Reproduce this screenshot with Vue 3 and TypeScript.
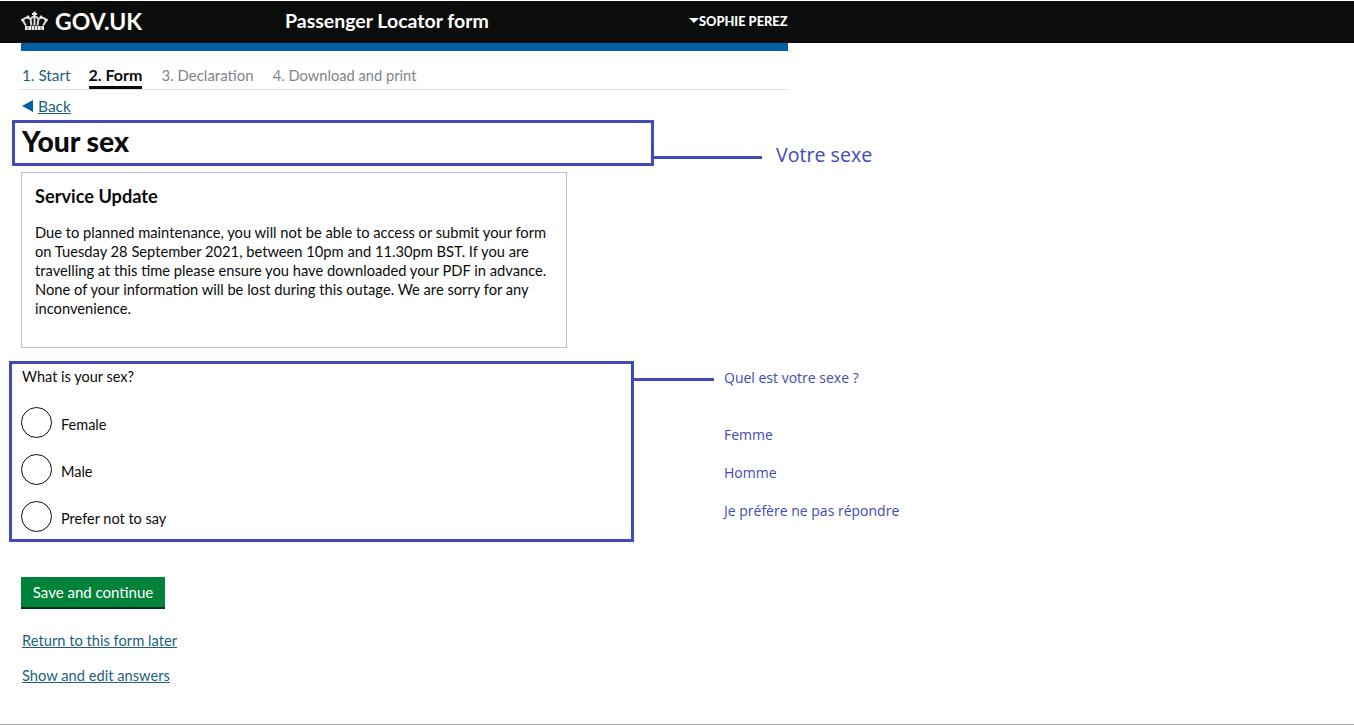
<script setup lang="ts">
const steps = [
  { label: '1. Start', state: 'done' },
  { label: '2. Form', state: 'current' },
  { label: '3. Declaration', state: 'todo' },
  { label: '4. Download and print', state: 'todo' },
]
const options = ['Female', 'Male', 'Prefer not to say']
const translations = [
  { text: 'Femme', cls: 'tr-1' },
  { text: 'Homme', cls: 'tr-2' },
  { text: 'Je préfère ne pas répondre', cls: 'tr-3' },
]
</script>

<template>
  <div class="page">
    <header class="topbar">
      <div class="brand">
        <svg class="crown" viewBox="0 0 27 20" width="27" height="20" aria-hidden="true">
          <g fill="none" stroke="#d8d8d8" stroke-width="2">
            <path d="M5 14.5 C3 12 2 10 2.5 8.5 C3.5 6.5 7 6 9.5 8 L10.5 14.5" />
            <path d="M22 14.5 C24 12 25 10 24.5 8.5 C23.5 6.5 20 6 17.5 8 L16.5 14.5" />
            <path d="M9.5 8 C11 6 12.5 5.5 13.5 5.5 C14.5 5.5 16 6 17.5 8" />
            <path d="M13.5 5.5 V14.5" />
          </g>
          <path d="M12.5 0.5 h2 v1.5 h1.5 v2 h-1.5 v1.5 h-2 v-1.5 h-1.5 v-2 h1.5 z" fill="#ececec" />
          <circle cx="1.6" cy="9" r="1.5" fill="#ececec" />
          <circle cx="25.4" cy="9" r="1.5" fill="#ececec" />
          <circle cx="7" cy="6" r="1.4" fill="#ececec" />
          <circle cx="20" cy="6" r="1.4" fill="#ececec" />
          <rect x="4" y="15" width="19" height="4" rx="0.5" fill="#ececec" />
          <path d="M7 15 v4 M10.5 15 v4 M13.5 15 v4 M16.5 15 v4 M20 15 v4" stroke="#0b0c0c" stroke-width="0.6" />
        </svg>
        <span class="wordmark">GOV.UK</span>
      </div>
      <span class="service">Passenger Locator form</span>
      <span class="user"><i class="caret"></i>SOPHIE PEREZ</span>
    </header>

    <main class="content">
      <div class="blue-bar"></div>
      <nav class="steps">
        <span v-for="s in steps" :key="s.label" class="step" :class="s.state">{{ s.label }}</span>
      </nav>
      <a class="back"><i class="back-arrow"></i><span>Back</span></a>
      <h1 class="title">Your sex</h1>

      <section class="notice">
        <h2>Service Update</h2>
        <p>Due to planned maintenance, you will not be able to access or submit your form on Tuesday 28 September 2021, between 10pm and 11.30pm BST. If you are travelling at this time please ensure you have downloaded your PDF in advance. None of your information will be lost during this outage. We are sorry for any inconvenience.</p>
      </section>

      <p class="question">What is your sex?</p>
      <div class="radios">
        <label v-for="o in options" :key="o" class="radio">
          <span class="circle"></span>
          <span class="radio-text">{{ o }}</span>
        </label>
      </div>

      <button class="save" type="button">Save and continue</button>
      <a class="link first">Return to this form later</a>
      <a class="link second">Show and edit answers</a>
    </main>

    <div class="anno-box box-title"></div>
    <div class="anno-line line-title"></div>
    <span class="anno-big">Votre sexe</span>
    <div class="anno-box box-form"></div>
    <div class="anno-line line-form"></div>
    <span class="anno-small tr-q">Quel est votre sexe ?</span>
    <span v-for="t in translations" :key="t.text" class="anno-small" :class="t.cls">{{ t.text }}</span>
  </div>
</template>

<style scoped>
.page {
  position: relative;
  height: 725px;
  box-sizing: border-box;
  padding-top: 1px;
  border-bottom: 1px solid #a8adb0;
  background: #fff;
  color: #0b0c0c;
  font-family: Lato, "Open Sans", sans-serif;
  overflow: hidden;
}
.topbar {
  height: 42px;
  box-sizing: border-box;
  padding: 0 0 3px 21px;
  background: #0b0c0c;
  color: #fff;
  display: flex;
  align-items: center;
}
.brand {
  display: flex;
  align-items: center;
  gap: 7px;
  width: 264px;
}
.wordmark {
  font-size: 23px;
  font-weight: 700;
}
.service {
  font-size: 19.5px;
  font-weight: 700;
  width: 404px;
}
.user {
  display: flex;
  align-items: center;
  font-size: 12.8px;
  font-weight: 900;
}
.caret {
  width: 0;
  height: 0;
  border-left: 5px solid transparent;
  border-right: 5px solid transparent;
  border-top: 5px solid #fff;
}
.content {
  width: 767px;
  margin-left: 21px;
}
.blue-bar {
  height: 8px;
  background: #005ea5;
}
.steps {
  display: flex;
  gap: 19px;
  height: 39px;
  box-sizing: border-box;
  padding: 13px 0 0 1px;
  border-bottom: 1px solid #dee0e2;
  font-size: 15.3px;
}
.step {
  height: 25px;
  line-height: 22px;
  box-sizing: border-box;
}
.done {
  color: #1d5f7e;
  margin-right: -1px;
}
.current {
  font-size: 16px;
  font-weight: 700;
  border-bottom: 3px solid #0b0c0c;
}
.todo {
  color: #7f8588;
  font-size: 15px;
}
.todo:last-child { font-size: 14.7px; }
.back {
  display: flex;
  align-items: center;
  gap: 5px;
  margin-top: 5px;
  padding-left: 1px;
  height: 21px;
  font-size: 15.5px;
  color: #1d5f7e;
}
.back span { text-decoration: underline; }
.back-arrow {
  width: 0;
  height: 0;
  border-top: 6px solid transparent;
  border-bottom: 6px solid transparent;
  border-right: 11px solid #005ea5;
}
.title {
  margin: 5px 0 0;
  padding-left: 1px;
  height: 41px;
  line-height: 40px;
  font-size: 28.3px;
  font-weight: 900;
}
.notice {
  width: 546px;
  height: 176px;
  box-sizing: border-box;
  margin-top: 10px;
  padding: 13px 13px 0;
  border: 1px solid #bfc1c3;
}
.notice h2 {
  margin: 0 0 17px;
  font-size: 18.2px;
  line-height: 20px;
  font-weight: 700;
}
.notice p {
  margin: 0;
  font-size: 14.7px;
  line-height: 19px;
}
.question {
  margin: 19px 0 0;
  padding-left: 1px;
  font-size: 14.5px;
  line-height: 20px;
}
.radios {
  display: flex;
  flex-direction: column;
  gap: 16px;
  margin-top: 20px;
}
.radio {
  display: flex;
  align-items: center;
  gap: 9px;
  height: 31px;
  font-size: 14.5px;
}
.radio-text { padding-top: 4px; }
.circle {
  width: 31px;
  height: 31px;
  box-sizing: border-box;
  border: 1.5px solid #0b0c0c;
  border-radius: 50%;
}
.save {
  display: block;
  width: 144px;
  height: 32px;
  margin-top: 45px;
  padding: 0;
  border: 0;
  border-bottom: 2px solid #003618;
  background: #00823b;
  color: #fff;
  font: 15px Lato, "Open Sans", sans-serif;
}
.link {
  display: table;
  margin-left: 1px;
  color: #1d5f7e;
  font-size: 14.7px;
  line-height: 20px;
  text-decoration: underline;
}
.first { margin-top: 21px; }
.second { margin-top: 15px; }
.anno-box {
  position: absolute;
  box-sizing: border-box;
  border: 3px solid #4249b8;
}
.box-title { left: 12px; top: 120px; width: 642px; height: 46px; }
.box-form { left: 9px; top: 361px; width: 625px; height: 181px; }
.anno-line {
  position: absolute;
  height: 3px;
  background: #4249b8;
}
.line-title { left: 654px; top: 156px; width: 108px; }
.line-form { left: 634px; top: 378px; width: 80px; }
.anno-big {
  position: absolute;
  left: 776px;
  top: 143px;
  font: 19.6px/24px "Open Sans", sans-serif;
  color: #4249b8;
}
.anno-small {
  position: absolute;
  left: 724px;
  font: 14px/18px "Open Sans", sans-serif;
  color: #4249b8;
}
.tr-q { top: 369px; }
.tr-1 { top: 426px; }
.tr-2 { top: 464px; }
.tr-3 { top: 502px; }
</style>
